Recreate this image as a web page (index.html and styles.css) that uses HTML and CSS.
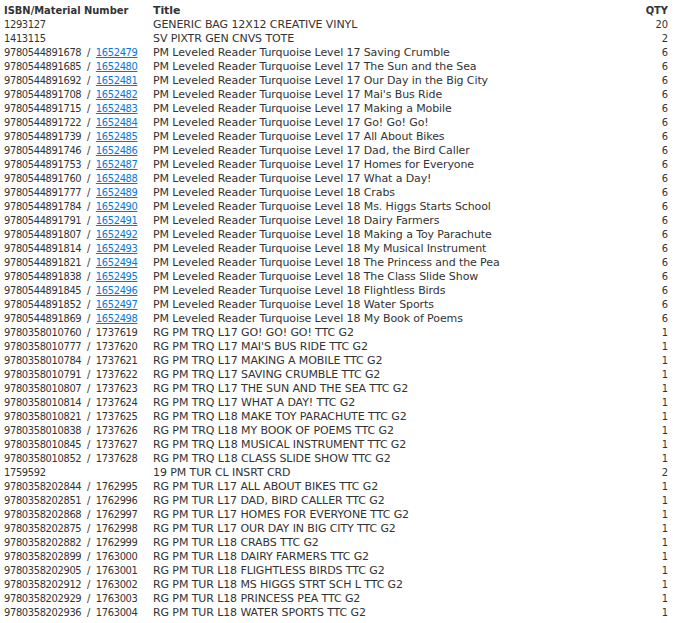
FILE: index.html
```html
<!DOCTYPE html>
<html lang="en">
<head>
    <meta charset="UTF-8">
    <title>Order Items</title>
    <link rel="stylesheet" href="styles.css">
</head>
<body>
    <table class="items">
        <thead>
            <tr><th class="isbn">ISBN/Material Number</th><th>Title</th><th class="qty">QTY</th></tr>
        </thead>
        <tbody>
            <tr><td class="isbn">1293127</td><td>GENERIC BAG 12X12 CREATIVE VINYL</td><td class="qty">20</td></tr>
            <tr><td class="isbn">1413115</td><td>SV PIXTR GEN CNVS TOTE</td><td class="qty">2</td></tr>
            <tr><td class="isbn">9780544891678 / <a href="#">1652479</a></td><td>PM Leveled Reader Turquoise Level 17 Saving Crumble</td><td class="qty">6</td></tr>
            <tr><td class="isbn">9780544891685 / <a href="#">1652480</a></td><td>PM Leveled Reader Turquoise Level 17 The Sun and the Sea</td><td class="qty">6</td></tr>
            <tr><td class="isbn">9780544891692 / <a href="#">1652481</a></td><td>PM Leveled Reader Turquoise Level 17 Our Day in the Big City</td><td class="qty">6</td></tr>
            <tr><td class="isbn">9780544891708 / <a href="#">1652482</a></td><td>PM Leveled Reader Turquoise Level 17 Mai's Bus Ride</td><td class="qty">6</td></tr>
            <tr><td class="isbn">9780544891715 / <a href="#">1652483</a></td><td>PM Leveled Reader Turquoise Level 17 Making a Mobile</td><td class="qty">6</td></tr>
            <tr><td class="isbn">9780544891722 / <a href="#">1652484</a></td><td>PM Leveled Reader Turquoise Level 17 Go! Go! Go!</td><td class="qty">6</td></tr>
            <tr><td class="isbn">9780544891739 / <a href="#">1652485</a></td><td>PM Leveled Reader Turquoise Level 17 All About Bikes</td><td class="qty">6</td></tr>
            <tr><td class="isbn">9780544891746 / <a href="#">1652486</a></td><td>PM Leveled Reader Turquoise Level 17 Dad, the Bird Caller</td><td class="qty">6</td></tr>
            <tr><td class="isbn">9780544891753 / <a href="#">1652487</a></td><td>PM Leveled Reader Turquoise Level 17 Homes for Everyone</td><td class="qty">6</td></tr>
            <tr><td class="isbn">9780544891760 / <a href="#">1652488</a></td><td>PM Leveled Reader Turquoise Level 17 What a Day!</td><td class="qty">6</td></tr>
            <tr><td class="isbn">9780544891777 / <a href="#">1652489</a></td><td>PM Leveled Reader Turquoise Level 18 Crabs</td><td class="qty">6</td></tr>
            <tr><td class="isbn">9780544891784 / <a href="#">1652490</a></td><td>PM Leveled Reader Turquoise Level 18 Ms. Higgs Starts School</td><td class="qty">6</td></tr>
            <tr><td class="isbn">9780544891791 / <a href="#">1652491</a></td><td>PM Leveled Reader Turquoise Level 18 Dairy Farmers</td><td class="qty">6</td></tr>
            <tr><td class="isbn">9780544891807 / <a href="#">1652492</a></td><td>PM Leveled Reader Turquoise Level 18 Making a Toy Parachute</td><td class="qty">6</td></tr>
            <tr><td class="isbn">9780544891814 / <a href="#">1652493</a></td><td>PM Leveled Reader Turquoise Level 18 My Musical Instrument</td><td class="qty">6</td></tr>
            <tr><td class="isbn">9780544891821 / <a href="#">1652494</a></td><td>PM Leveled Reader Turquoise Level 18 The Princess and the Pea</td><td class="qty">6</td></tr>
            <tr><td class="isbn">9780544891838 / <a href="#">1652495</a></td><td>PM Leveled Reader Turquoise Level 18 The Class Slide Show</td><td class="qty">6</td></tr>
            <tr><td class="isbn">9780544891845 / <a href="#">1652496</a></td><td>PM Leveled Reader Turquoise Level 18 Flightless Birds</td><td class="qty">6</td></tr>
            <tr><td class="isbn">9780544891852 / <a href="#">1652497</a></td><td>PM Leveled Reader Turquoise Level 18 Water Sports</td><td class="qty">6</td></tr>
            <tr><td class="isbn">9780544891869 / <a href="#">1652498</a></td><td>PM Leveled Reader Turquoise Level 18 My Book of Poems</td><td class="qty">6</td></tr>
            <tr><td class="isbn">9780358010760 / 1737619</td><td>RG PM TRQ L17 GO! GO! GO! TTC G2</td><td class="qty">1</td></tr>
            <tr><td class="isbn">9780358010777 / 1737620</td><td>RG PM TRQ L17 MAI'S BUS RIDE TTC G2</td><td class="qty">1</td></tr>
            <tr><td class="isbn">9780358010784 / 1737621</td><td>RG PM TRQ L17 MAKING A MOBILE TTC G2</td><td class="qty">1</td></tr>
            <tr><td class="isbn">9780358010791 / 1737622</td><td>RG PM TRQ L17 SAVING CRUMBLE TTC G2</td><td class="qty">1</td></tr>
            <tr><td class="isbn">9780358010807 / 1737623</td><td>RG PM TRQ L17 THE SUN AND THE SEA TTC G2</td><td class="qty">1</td></tr>
            <tr><td class="isbn">9780358010814 / 1737624</td><td>RG PM TRQ L17 WHAT A DAY! TTC G2</td><td class="qty">1</td></tr>
            <tr><td class="isbn">9780358010821 / 1737625</td><td>RG PM TRQ L18 MAKE TOY PARACHUTE TTC G2</td><td class="qty">1</td></tr>
            <tr><td class="isbn">9780358010838 / 1737626</td><td>RG PM TRQ L18 MY BOOK OF POEMS TTC G2</td><td class="qty">1</td></tr>
            <tr><td class="isbn">9780358010845 / 1737627</td><td>RG PM TRQ L18 MUSICAL INSTRUMENT TTC G2</td><td class="qty">1</td></tr>
            <tr><td class="isbn">9780358010852 / 1737628</td><td>RG PM TRQ L18 CLASS SLIDE SHOW TTC G2</td><td class="qty">1</td></tr>
            <tr><td class="isbn">1759592</td><td>19 PM TUR CL INSRT CRD</td><td class="qty">2</td></tr>
            <tr><td class="isbn">9780358202844 / 1762995</td><td>RG PM TUR L17 ALL ABOUT BIKES TTC G2</td><td class="qty">1</td></tr>
            <tr><td class="isbn">9780358202851 / 1762996</td><td>RG PM TUR L17 DAD, BIRD CALLER TTC G2</td><td class="qty">1</td></tr>
            <tr><td class="isbn">9780358202868 / 1762997</td><td>RG PM TUR L17 HOMES FOR EVERYONE TTC G2</td><td class="qty">1</td></tr>
            <tr><td class="isbn">9780358202875 / 1762998</td><td>RG PM TUR L17 OUR DAY IN BIG CITY TTC G2</td><td class="qty">1</td></tr>
            <tr><td class="isbn">9780358202882 / 1762999</td><td>RG PM TUR L18 CRABS TTC G2</td><td class="qty">1</td></tr>
            <tr><td class="isbn">9780358202899 / 1763000</td><td>RG PM TUR L18 DAIRY FARMERS TTC G2</td><td class="qty">1</td></tr>
            <tr><td class="isbn">9780358202905 / 1763001</td><td>RG PM TUR L18 FLIGHTLESS BIRDS TTC G2</td><td class="qty">1</td></tr>
            <tr><td class="isbn">9780358202912 / 1763002</td><td>RG PM TUR L18 MS HIGGS STRT SCH L TTC G2</td><td class="qty">1</td></tr>
            <tr><td class="isbn">9780358202929 / 1763003</td><td>RG PM TUR L18 PRINCESS PEA TTC G2</td><td class="qty">1</td></tr>
            <tr><td class="isbn">9780358202936 / 1763004</td><td>RG PM TUR L18 WATER SPORTS TTC G2</td><td class="qty">1</td></tr>
        </tbody>
    </table>
</body>
</html>
```

FILE: styles.css
```css
body { margin: 4px 10px 0 4px; background: #fff; color: #333; font-family: 'DejaVu Sans', sans-serif; font-size: 11px; letter-spacing: -0.1px; }
.items { width: 100%; border-collapse: collapse; }
.items th, .items td { padding: 0; height: 14px; line-height: 14px; text-align: left; white-space: nowrap; vertical-align: top; }
.items th { font-weight: 700; }
.items .isbn { width: 149px; font-family: 'DejaVu Sans Condensed', 'DejaVu Sans', sans-serif; letter-spacing: -0.35px; word-spacing: 3px; }
.items th.isbn { letter-spacing: 0; word-spacing: 0; }
.items .qty { text-align: right; font-family: 'DejaVu Sans Condensed', 'DejaVu Sans', sans-serif; letter-spacing: 0; }
.items a { color: #0a78d1; text-decoration: underline; }
```
